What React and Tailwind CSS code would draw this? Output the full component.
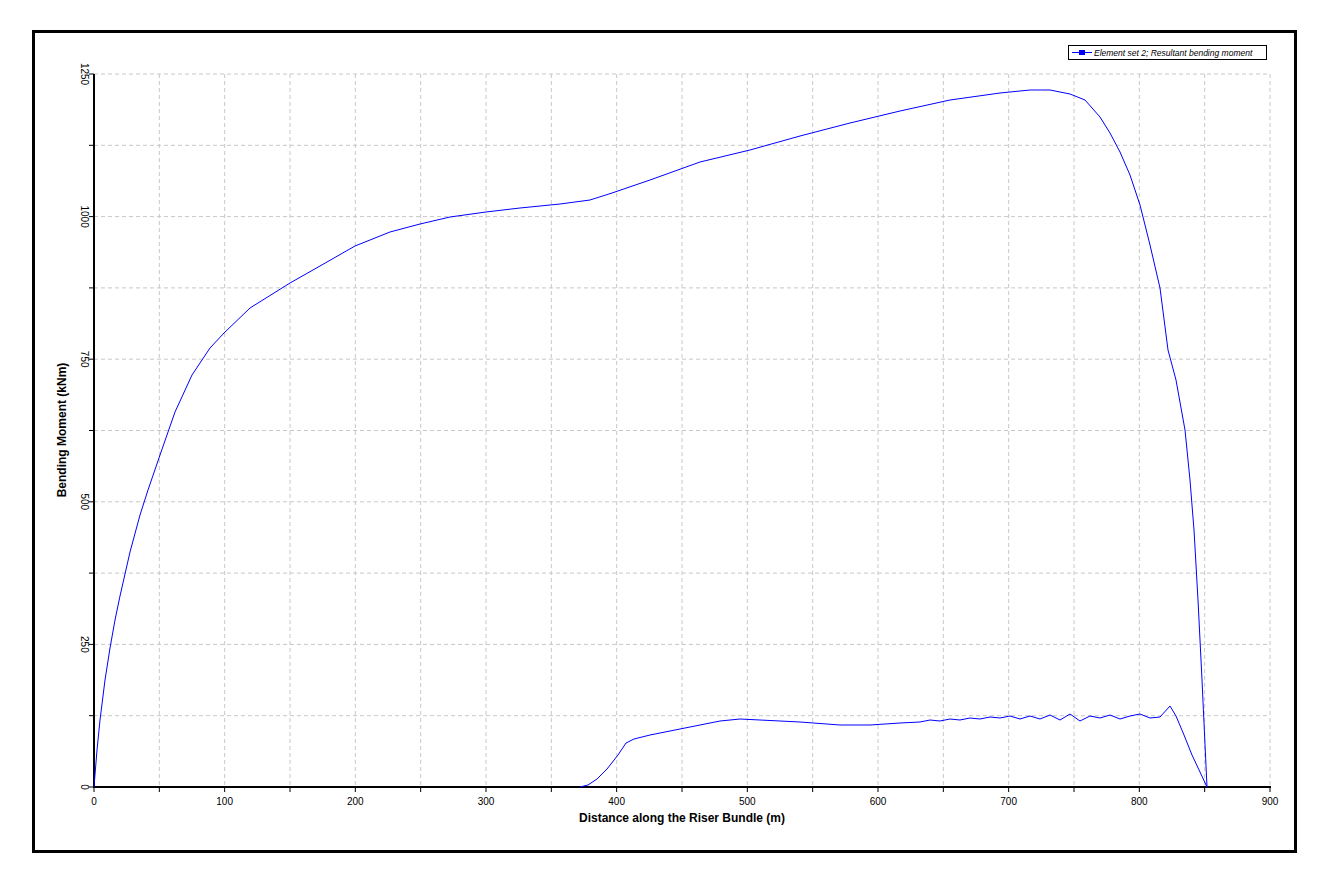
export default function App() {
  const X = (m) => 94 + (m * 1176) / 900;
  const Y = (v) => 787 - (v * 713) / 1250;
  const upper = [[94,787],[97,750],[100,720],[105,680],[110,648],[115,620],[120,596],[130,552],[140,515],[148,490],[160,455],[175,412],[192,375],[210,348],[224,333],[250,308],[290,283],[320,266],[355,246],[390,232],[420,224],[450,217],[486,212],[520,208],[560,204],[590,200],[612,193],[650,180],[700,162],[750,150],[800,136],[850,123],[900,111],[950,100],[1000,93],[1030,90],[1050,90],[1070,94],[1085,100],[1100,117],[1110,133],[1120,152],[1130,175],[1140,205],[1150,245],[1160,288],[1168,350],[1176,380],[1185,430],[1190,480],[1194,530],[1198,600],[1202,680],[1207,787]];
  const lower = [[580,787],[588,785],[597,779],[607,769],[618,755],[626,743],[634,739],[650,735],[670,731],[700,725],[720,721],[740,719],[760,720],[800,722],[840,725],[870,725],[900,723],[920,722],[930,720],[940,721],[950,719],[960,720],[970,718],[980,719],[990,717],[1000,718],[1010,716],[1020,719],[1030,716],[1040,719],[1050,715],[1060,720],[1070,714],[1080,721],[1090,716],[1100,718],[1110,715],[1120,719],[1130,716],[1140,714],[1150,718],[1160,717],[1170,712],[1175,718],[1182,710],[1190,716],[1200,714],[1210,717],[1220,712],[1230,716],[1240,710],[1250,712],[1260,716],[1270,712]];
  // adjust lower: last section after x≈1170 descends
  const lower2 = lower.filter(p=>p[0]<=1160).concat([[1170,706],[1176,716],[1184,735],[1192,755],[1200,772],[1207,787]]);
  const pts = (a) => a.map((p) => p.join(",")).join(" ");
  const xs = []; for (let m = 0; m <= 900; m += 50) xs.push(m);
  const ys = []; for (let v = 0; v <= 1250; v += 125) ys.push(v);
  const f = { fontFamily: '"Liberation Sans", Arial, sans-serif' };
  return (
    <div className="w-[1326px] h-[882px] bg-white pt-[30px] pl-[32px]">
      <div className="w-[1265px] h-[823px] border-[3px] border-black">
        <svg width="1259" height="817" viewBox="35 33 1259 817" style={f}>
          {xs.slice(1).map((m) => (
            <line key={"gx" + m} x1={X(m)} x2={X(m)} y1={74} y2={787} stroke="#c8c8c8" strokeDasharray="4 3" />
          ))}
          {ys.slice(1).map((v) => (
            <line key={"gy" + v} x1={94} x2={1270} y1={Y(v)} y2={Y(v)} stroke="#c8c8c8" strokeDasharray="4 3" />
          ))}
          <line x1={94} x2={94} y1={74} y2={788} stroke="#000" strokeWidth="2" />
          <line x1={93} x2={1271} y1={787} y2={787} stroke="#000" strokeWidth="2" />
          {xs.map((m) => (
            <line key={"tx" + m} x1={X(m)} x2={X(m)} y1={787} y2={792} stroke="#000" />
          ))}
          {ys.map((v) => (
            <line key={"ty" + v} x1={89} x2={94} y1={Y(v)} y2={Y(v)} stroke="#000" />
          ))}
          {xs.filter((m) => m % 100 === 0).map((m) => (
            <text key={"lx" + m} x={X(m)} y={805} fontSize="10" textAnchor="middle" fill="#000">{m}</text>
          ))}
          {ys.filter((v) => v % 250 === 0).map((v) => (
            <text key={"ly" + v} x={0} y={0} fontSize="10" textAnchor="middle" fill="#000" transform={`translate(81 ${Y(v)}) rotate(90)`}>{v}</text>
          ))}
          <text x={682} y={822} fontSize="12" fontWeight="bold" textAnchor="middle">Distance along the Riser Bundle (m)</text>
          <text x={0} y={0} fontSize="12" fontWeight="bold" textAnchor="middle" transform="translate(66 430) rotate(-90)">Bending Moment (kNm)</text>
          <polyline points={pts(upper)} fill="none" stroke="#0000ff" strokeWidth="1" />
          <polyline points={pts(lower2)} fill="none" stroke="#0000ff" strokeWidth="1" />
          <rect x={1068.5} y={45.5} width={198} height={14} fill="#fff" stroke="#000" />
          <line x1={1072} x2={1092} y1={52.5} y2={52.5} stroke="#0000ff" />
          <rect x={1079} y={50} width={6} height={5} fill="#0000ff" />
          <text x={1094} y={56} fontSize="8.5" fontStyle="italic">Element set  2; Resultant bending moment</text>
        </svg>
      </div>
    </div>
  );
}
